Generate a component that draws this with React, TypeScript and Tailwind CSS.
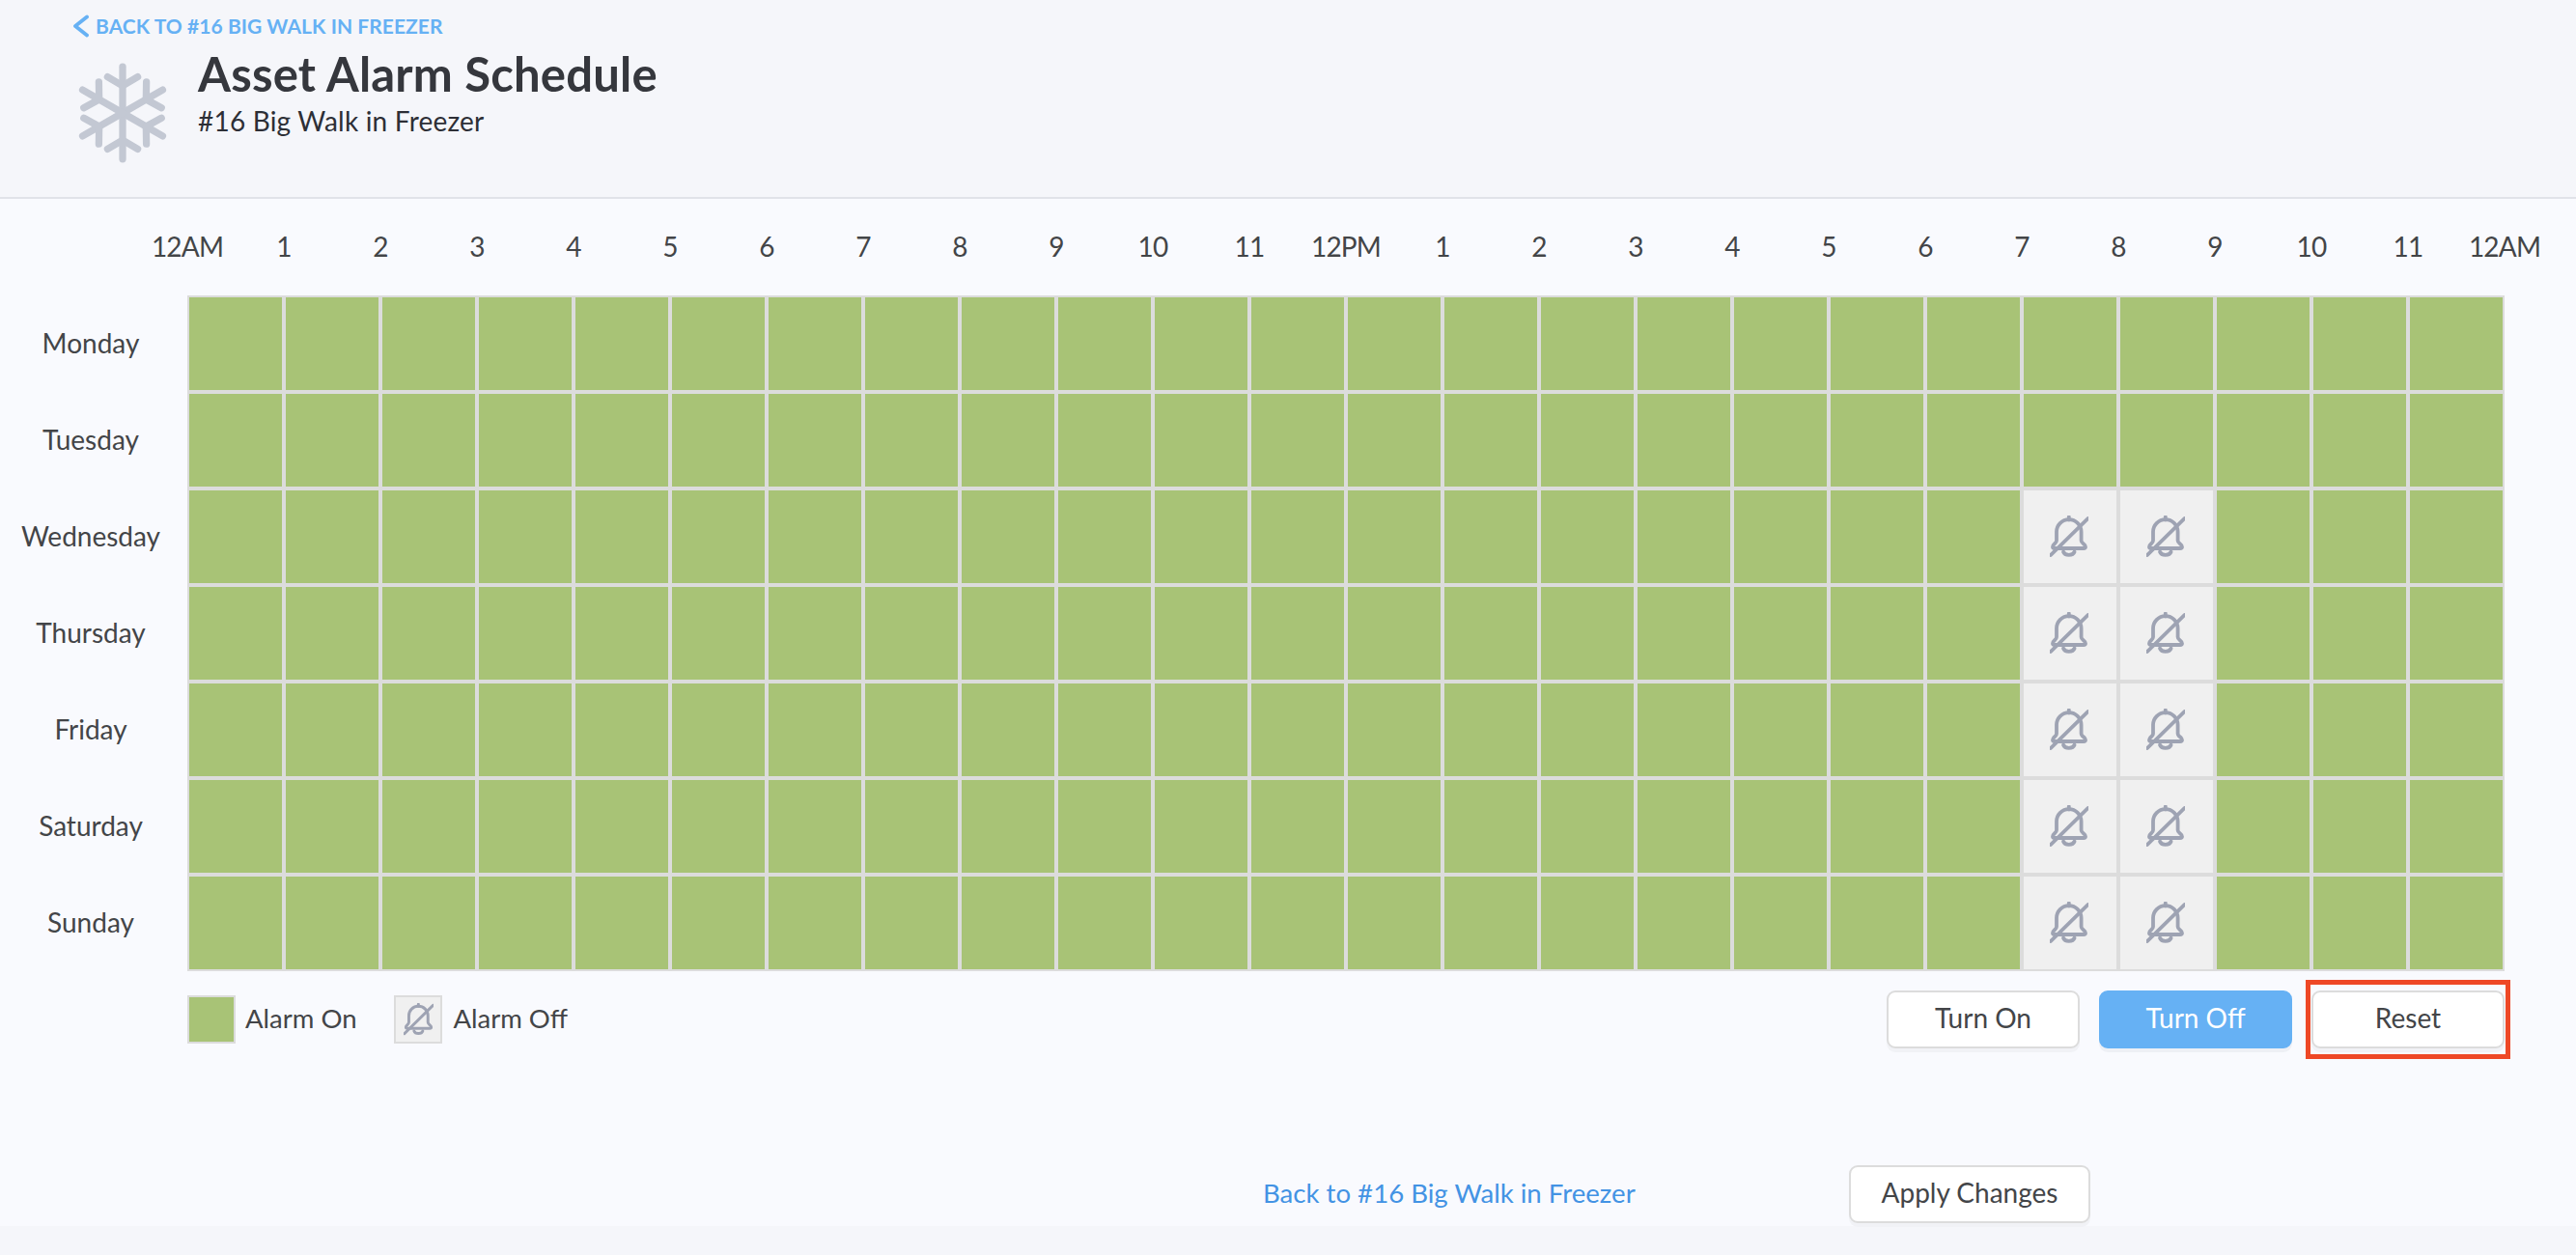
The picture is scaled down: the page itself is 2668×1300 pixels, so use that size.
const hours = ['12AM', '1', '2', '3', '4', '5', '6', '7', '8', '9', '10', '11', '12PM', '1', '2', '3', '4', '5', '6', '7', '8', '9', '10', '11', '12AM'];
const days = ['Monday', 'Tuesday', 'Wednesday', 'Thursday', 'Friday', 'Saturday', 'Sunday'];
const cols = Array.from({ length: 24 }, (_, i) => i);

function BellOff({ className }: { className: string }) {
  return (
    <svg viewBox="0 0 40 44" fill="none" stroke="#9ea3b3" strokeWidth="3.8" strokeLinecap="round" strokeLinejoin="round" className={className}>
      <path d="M19.8 1.5v3" />
      <path d="M7 17a12.8 12.8 0 0 1 25.6 0v9c0 3 4.4 3.5 4.4 6.5 0 1-.8 1.5-2 1.5H5c-1.2 0-2-.5-2-1.5 0-3 4-3.5 4-6.5z" />
      <path d="M14 37.5a6 4.5 0 0 0 11.6 0" />
      <path d="M1 41 39.5 3" />
    </svg>
  );
}

function Snowflake() {
  return (
    <svg viewBox="-50 -50 100 100" fill="none" stroke="#c3c8d3" strokeWidth="7" strokeLinecap="round" strokeLinejoin="round" className="h-[104px] w-[104px]">
      {[0, 60, 120, 180, 240, 300].map((a) => (
        <g key={a} transform={`rotate(${a})`}>
          <path d="M0 0V-46" />
          <path d="M-15-36 0-27 15-36" />
        </g>
      ))}
    </svg>
  );
}

function Btn({ label, primary }: { label: string; primary?: boolean }) {
  return (
    <button
      className={
        primary
          ? 'h-[60px] w-[200px] rounded-[9px] border-2 border-[#66b1f4] bg-[#66b1f4] pb-[5px] text-[28px] text-white shadow-[0_4px_0_#eef0f5]'
          : 'h-[60px] w-[200px] rounded-[9px] border-2 border-[#dcdcdc] bg-white pb-[5px] text-[28px] text-[#434548] shadow-[0_4px_0_#f1f2f6]'
      }
    >
      {label}
    </button>
  );
}

export default function App() {
  return (
    <div className="flex h-[1300px] flex-col bg-[#f5f6fa] font-['Lato','Liberation_Sans',sans-serif]">
      <header className="h-[206px] border-b-2 border-b-[#e1e3e9] pl-[75px] pt-[14px]">
        <a href="#" className="flex items-center gap-[7px] text-[21px] leading-[26px] font-bold tracking-[0.05px] text-[#66b1f4]">
          <svg viewBox="0 0 17 24" fill="none" stroke="currentColor" strokeWidth="3.8" strokeLinecap="round" strokeLinejoin="round" className="h-[24px] w-[17px]">
            <path d="M15 2.5 3 12l12 9.5" />
          </svg>
          BACK TO #16 BIG WALK IN FREEZER
        </a>
        <div className="flex">
          <div className="mt-[25px]">
            <Snowflake />
          </div>
          <div className="ml-[26px]">
            <h1 className="mt-[8px] text-[49px] leading-[56px] font-bold tracking-[0.2px] text-[#35373d]">Asset Alarm Schedule</h1>
            <p className="mt-[5px] text-[28px] leading-[32px] tracking-[0.2px] text-[#2d2f36]">#16 Big Walk in Freezer</p>
          </div>
        </div>
      </header>

      <main className="flex flex-1 flex-col bg-[#f9fafe]">
        <div className="flex h-[100px] items-center pb-[3px] pl-[144px] text-[28px] tracking-[-0.8px] text-[#434548]">
          {hours.map((h, i) => (
            <div key={i} className="w-[100px] text-center">{h}</div>
          ))}
        </div>

        <div className="flex">
          <div className="w-[194px] pr-[6px]">
            {days.map((d) => (
              <div key={d} className="flex h-[100px] items-center justify-center pb-[3px] text-[28px] text-[#434548]">{d}</div>
            ))}
          </div>
          <div className="grid grid-cols-[repeat(24,100px)] grid-rows-[repeat(7,100px)]">
            {days.flatMap((d, r) =>
              cols.map((c) => {
                const off = r >= 2 && (c === 19 || c === 20);
                return (
                  <div
                    key={d + c}
                    className={off ? 'flex items-center justify-center border-2 border-[#dcdcdc] bg-[#f0f0f0] pr-[2px]' : 'border-2 border-[#dcdcdc] bg-[#a8c376]'}
                  >
                    {off && <BellOff className="h-[44px] w-[40px]" />}
                  </div>
                );
              }),
            )}
          </div>
        </div>

        <div className="mt-[20px] flex items-center pl-[194px]">
          <div className="h-[50px] w-[50px] border-2 border-[#dcdcdc] bg-[#a8c376]" />
          <span className="ml-[10px] pb-[3px] text-[27.5px] text-[#434548]">Alarm On</span>
          <div className="ml-[39px] flex h-[50px] w-[50px] items-center justify-center border-2 border-[#dcdcdc] bg-[#f0f0f0]">
            <BellOff className="h-[34px] w-[31px]" />
          </div>
          <span className="ml-[11px] pb-[3px] text-[27.5px] text-[#434548]">Alarm Off</span>
          <div className="ml-auto mr-[74px] flex gap-[20px]">
            <Btn label="Turn On" />
            <Btn label="Turn Off" primary />
            <div className="relative">
              <Btn label="Reset" />
              <span className="absolute -inset-x-[6px] -inset-y-[11px] border-[5px] border-[#ee4826]" />
            </div>
          </div>
        </div>

        <div className="mt-auto flex items-center pb-[3px] pl-[1308px]">
          <a href="#" className="pb-[3px] text-[27.6px] text-[#4393e4]">Back to #16 Big Walk in Freezer</a>
          <button className="ml-auto mr-[503px] h-[60px] w-[250px] rounded-[9px] border-2 border-[#dcdcdc] bg-white pb-[5px] text-[28px] text-[#434548] shadow-[0_4px_0_#f1f2f6]">
            Apply Changes
          </button>
        </div>
      </main>

      <div className="h-[30px] shrink-0" />
    </div>
  );
}
